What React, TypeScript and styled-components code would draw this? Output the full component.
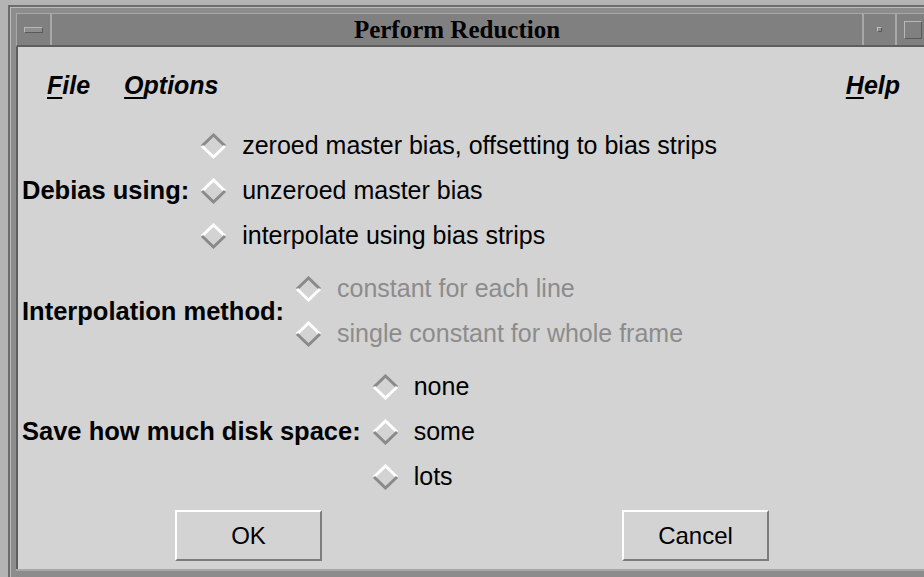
import React from "react"
import styled, { createGlobalStyle } from "styled-components"

const GlobalStyle = createGlobalStyle`
  html, body {
    margin: 0;
    padding: 0;
    background: #b4b4b4;
    overflow: hidden;
  }
`

const Screen = styled.div`
  width: 924px;
  height: 577px;
  overflow: hidden;
  background: #b4b4b4;
  padding: 5px 0 0 8px;
  box-sizing: border-box;
`

const Frame = styled.div`
  width: 920px;
  height: 580px;
  display: flex;
  flex-direction: column;
  background: #8c8c8c;
  border-top: 2px solid #6c6c6c;
  border-left: 2px solid #6c6c6c;
  box-shadow: inset 1px 1px 0 #bcbcbc;
  padding: 6px 0 0 6px;
  box-sizing: border-box;
`

const TitleBar = styled.div`
  height: 31px;
  display: flex;
  background: #808080;
  border-top: 1px solid #a8a8a8;
  border-left: 1px solid #a8a8a8;
  border-bottom: 2px solid #5e5e5e;
`

const MenuButton = styled.div`
  width: 33px;
  display: flex;
  align-items: center;
  justify-content: center;
  border-right: 2px solid #a8a8a8;
`

const MenuBarGlyph = styled.div`
  width: 17px;
  height: 4px;
  background: #8e8e8e;
  border-top: 1px solid #b8b8b8;
  border-left: 1px solid #b8b8b8;
  border-bottom: 1px solid #5a5a5a;
  border-right: 1px solid #5a5a5a;
`

const Title = styled.div`
  flex: 1;
  display: flex;
  align-items: center;
  justify-content: center;
  font-family: "Liberation Serif", "Times New Roman", serif;
  font-weight: bold;
  font-size: 25px;
  color: #000;
`

const TitleButton = styled.div`
  width: 31px;
  display: flex;
  align-items: center;
  justify-content: center;
  border-left: 2px solid #a8a8a8;
`

const MinGlyph = styled.div`
  width: 3px;
  height: 3px;
  background: #8a8a8a;
  border-top: 1px solid #c0c0c0;
  border-left: 1px solid #c0c0c0;
  border-bottom: 1px solid #5a5a5a;
  border-right: 1px solid #5a5a5a;
`

const MaxGlyph = styled.div`
  width: 16px;
  height: 16px;
  background: #808080;
  border-top: 1px solid #b8b8b8;
  border-left: 1px solid #b8b8b8;
  border-bottom: 1px solid #5a5a5a;
  border-right: 1px solid #5a5a5a;
`

const Content = styled.div`
  height: 522px;
  display: flex;
  flex-direction: column;
  background: #d3d3d3;
  border-left: 2px solid #5e5e5e;
  padding-left: 4px;
  font-family: "Liberation Sans", Arial, sans-serif;
  color: #000;
`

const MenuBar = styled.div`
  height: 76px;
  display: flex;
  align-items: center;
  width: 878px;
  padding-left: 25px;
  box-sizing: border-box;
`

const MenuItem = styled.span<{ $right?: boolean }>`
  font-size: 25px;
  font-weight: bold;
  font-style: italic;
  margin-right: 34px;
  ${({ $right }) => ($right ? "margin-left: auto; margin-right: 0;" : "")}

  u {
    text-decoration-thickness: 2px;
    text-underline-offset: 3px;
  }
`

const Form = styled.div`
  display: flex;
  flex-direction: column;
  gap: 8px;
`

const Group = styled.div`
  display: flex;
  align-items: center;
  gap: 11px;
`

const Label = styled.div`
  font-size: 25.5px;
  font-weight: bold;
  white-space: nowrap;
`

const Options = styled.div`
  display: flex;
  flex-direction: column;
`

const Option = styled.div<{ $disabled?: boolean }>`
  height: 45px;
  display: flex;
  align-items: center;
  gap: 15px;
  font-size: 25px;
  white-space: nowrap;
  color: ${({ $disabled }) => ($disabled ? "#8c8c8c" : "#000")};
`

const ButtonRow = styled.div`
  display: flex;
  gap: 300px;
  padding-left: 153px;
  margin-top: 11px;
`

const PushButton = styled.div`
  width: 143px;
  height: 47px;
  display: flex;
  align-items: center;
  justify-content: center;
  background: #d3d3d3;
  border-top: 2px solid #ffffff;
  border-left: 2px solid #ffffff;
  border-bottom: 2px solid #7c7c7c;
  border-right: 2px solid #7c7c7c;
  font-size: 24px;
`

const BottomEdge = styled.div`
  height: 2px;
  background: #a8a8a8;
`

// Motif style diamond toggle: top edges dark when set, light when unset
function Diamond({ on }: { on: boolean }) {
  const top = on ? "#8a8a8a" : "#ffffff"
  const bottom = on ? "#ffffff" : "#8a8a8a"
  return (
    <svg width="27" height="26" viewBox="0 0 27 26">
      <polyline points="2,13 13.5,2 25,13" fill="none" stroke={top} strokeWidth="3" strokeLinejoin="miter" />
      <polyline points="2,13 13.5,24 25,13" fill="none" stroke={bottom} strokeWidth="3" strokeLinejoin="miter" />
    </svg>
  )
}

type Choice = { text: string; on?: boolean }

function RadioGroup({ label, choices, disabled }: { label: string; choices: Choice[]; disabled?: boolean }) {
  return (
    <Group>
      <Label>{label}</Label>
      <Options>
        {choices.map(c => (
          <Option key={c.text} $disabled={disabled}>
            <Diamond on={!!c.on} />
            {c.text}
          </Option>
        ))}
      </Options>
    </Group>
  )
}

export default function App() {
  return (
    <>
      <GlobalStyle />
      <Screen>
        <Frame>
          <TitleBar>
            <MenuButton><MenuBarGlyph /></MenuButton>
            <Title>Perform Reduction</Title>
            <TitleButton><MinGlyph /></TitleButton>
            <TitleButton><MaxGlyph /></TitleButton>
          </TitleBar>
          <Content>
            <MenuBar>
              <MenuItem><u>F</u>ile</MenuItem>
              <MenuItem><u>O</u>ptions</MenuItem>
              <MenuItem $right><u>H</u>elp</MenuItem>
            </MenuBar>
            <Form>
              <RadioGroup
                label="Debias using:"
                choices={[
                  { text: "zeroed master bias, offsetting to bias strips", on: true },
                  { text: "unzeroed master bias" },
                  { text: "interpolate using bias strips" },
                ]}
              />
              <RadioGroup
                label="Interpolation method:"
                disabled
                choices={[
                  { text: "constant for each line", on: true },
                  { text: "single constant for whole frame" },
                ]}
              />
              <RadioGroup
                label="Save how much disk space:"
                choices={[
                  { text: "none", on: true },
                  { text: "some" },
                  { text: "lots" },
                ]}
              />
            </Form>
            <ButtonRow>
              <PushButton>OK</PushButton>
              <PushButton>Cancel</PushButton>
            </ButtonRow>
          </Content>
          <BottomEdge />
        </Frame>
      </Screen>
    </>
  )
}
